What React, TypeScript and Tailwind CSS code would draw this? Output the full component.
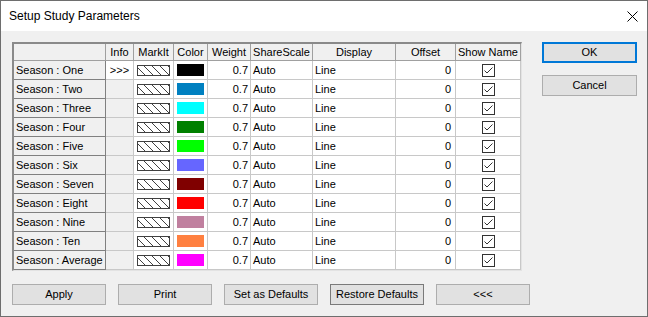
const rows = [
  { name: "Season : One", color: "#000000", info: ">>>" },
  { name: "Season : Two", color: "#0080c0" },
  { name: "Season : Three", color: "#00ffff" },
  { name: "Season : Four", color: "#008000" },
  { name: "Season : Five", color: "#00ff00" },
  { name: "Season : Six", color: "#6666ff" },
  { name: "Season : Seven", color: "#800000" },
  { name: "Season : Eight", color: "#ff0000" },
  { name: "Season : Nine", color: "#c0809f" },
  { name: "Season : Ten", color: "#ff8040" },
  { name: "Season : Average", color: "#ff00ff" },
]

const cols = "grid-cols-[92px_28px_40px_34px_43px_62px_83px_60px_65px]"

function Hatch() {
  return (
    <svg width="33" height="11" viewBox="0 0 33 11" className="block">
      <defs>
        <clipPath id="hc">
          <rect x="0" y="0" width="33" height="11" />
        </clipPath>
      </defs>
      <rect x="0" y="0" width="33" height="11" fill="#fff" />
      <g clipPath="url(#hc)" stroke="#404040" strokeWidth="1">
        {[-10, -2, 6, 14, 22, 30].map((x) => (
          <line key={x} x1={x} y1={0} x2={x + 11} y2={11} />
        ))}
      </g>
      <rect x="0.5" y="0.5" width="32" height="10" fill="none" stroke="#404040" />
    </svg>
  )
}

function Check() {
  return (
    <svg width="13" height="13" viewBox="0 0 13 13" className="block">
      <rect x="0.5" y="0.5" width="12" height="12" fill="#fff" stroke="#333" />
      <polyline points="2.5,6.5 5,9 10.5,3.5" fill="none" stroke="#333" strokeWidth="1" />
    </svg>
  )
}

function Btn({ label, w, primary, dark }: { label: string; w: string; primary?: boolean; dark?: boolean }) {
  return (
    <div
      className={`${w} h-[21px] flex items-center justify-center bg-[#e1e1e1] ${
        primary ? "border-2 border-[#0078d7]" : dark ? "border border-[#7a7a7a]" : "border border-[#adadad]"
      }`}
    >
      {label}
    </div>
  )
}

export default function App() {
  const headers = ["", "Info", "MarkIt", "Color", "Weight", "ShareScale", "Display", "Offset", "Show Name"]

  return (
    <div
      className="w-[648px] h-[317px] border border-[#6e6e6e] bg-[#f0f0f0] flex flex-col text-black text-[11px]"
      style={{ fontFamily: '"Liberation Sans", Arial, sans-serif' }}
    >
      <div className="h-[30px] bg-white flex items-center justify-between pl-[8px] pr-[9px] shrink-0">
        <span className="text-[12px]">Setup Study Parameters</span>
        <svg width="11" height="11" viewBox="0 0 11 11">
          <path d="M0.5 0.5 L10.5 10.5 M10.5 0.5 L0.5 10.5" stroke="#000" strokeWidth="1" />
        </svg>
      </div>

      <div className="flex pl-[11px] pt-[11px]">
        <div className="self-start border-t-2 border-l-2 border-t-[#8a8a8a] border-l-[#8a8a8a] border-r border-b border-r-[#e3e3e3] border-b-[#e3e3e3]">
          <div className={`grid ${cols}`}>
            {headers.map((h, i) => (
              <div
                key={i}
                className="h-[17px] flex items-center justify-center bg-[#f0f0f0] border-r border-b border-[#a0a0a0] whitespace-nowrap"
              >
                {h}
              </div>
            ))}
            {rows.map((r) => (
              <div key={r.name} className="contents">
                <div className="h-[19px] flex items-center pl-[2px] bg-[#f0f0f0] border-r border-b border-[#808080] whitespace-nowrap">
                  {r.name}
                </div>
                <div
                  className={`h-[19px] flex items-center justify-center border-r border-b border-[#c8c8c8] ${
                    r.info ? "bg-white" : "bg-[#f0f0f0]"
                  }`}
                >
                  {r.info ?? ""}
                </div>
                <div className="h-[19px] flex items-center justify-center bg-white border-r border-b border-[#c8c8c8]">
                  <Hatch />
                </div>
                <div className="h-[19px] flex items-center justify-center bg-white border-r border-b border-[#c8c8c8]">
                  <div className="w-[27px] h-[12px]" style={{ backgroundColor: r.color }} />
                </div>
                <div className="h-[19px] flex items-center justify-end pr-[2px] bg-white border-r border-b border-[#c8c8c8]">
                  0.7
                </div>
                <div className="h-[19px] flex items-center pl-[2px] bg-white border-r border-b border-[#c8c8c8]">
                  Auto
                </div>
                <div className="h-[19px] flex items-center pl-[2px] bg-white border-r border-b border-[#c8c8c8]">
                  Line
                </div>
                <div className="h-[19px] flex items-center justify-end pr-[4px] bg-white border-r border-b border-[#c8c8c8]">
                  0
                </div>
                <div className="h-[19px] flex items-center justify-center bg-white border-r border-b border-[#c8c8c8]">
                  <Check />
                </div>
              </div>
            ))}
          </div>
        </div>

        <div className="flex flex-col gap-[12px] ml-[20px]">
          <Btn label="OK" w="w-[95px]" primary />
          <Btn label="Cancel" w="w-[95px]" />
        </div>
      </div>

      <div className="flex gap-[12px] pl-[11px] mt-[13px]">
        <Btn label="Apply" w="w-[94px]" />
        <Btn label="Print" w="w-[94px]" />
        <Btn label="Set as Defaults" w="w-[94px]" />
        <Btn label="Restore Defaults" w="w-[94px]" dark />
        <Btn label="<<<" w="w-[94px]" />
      </div>
    </div>
  )
}
